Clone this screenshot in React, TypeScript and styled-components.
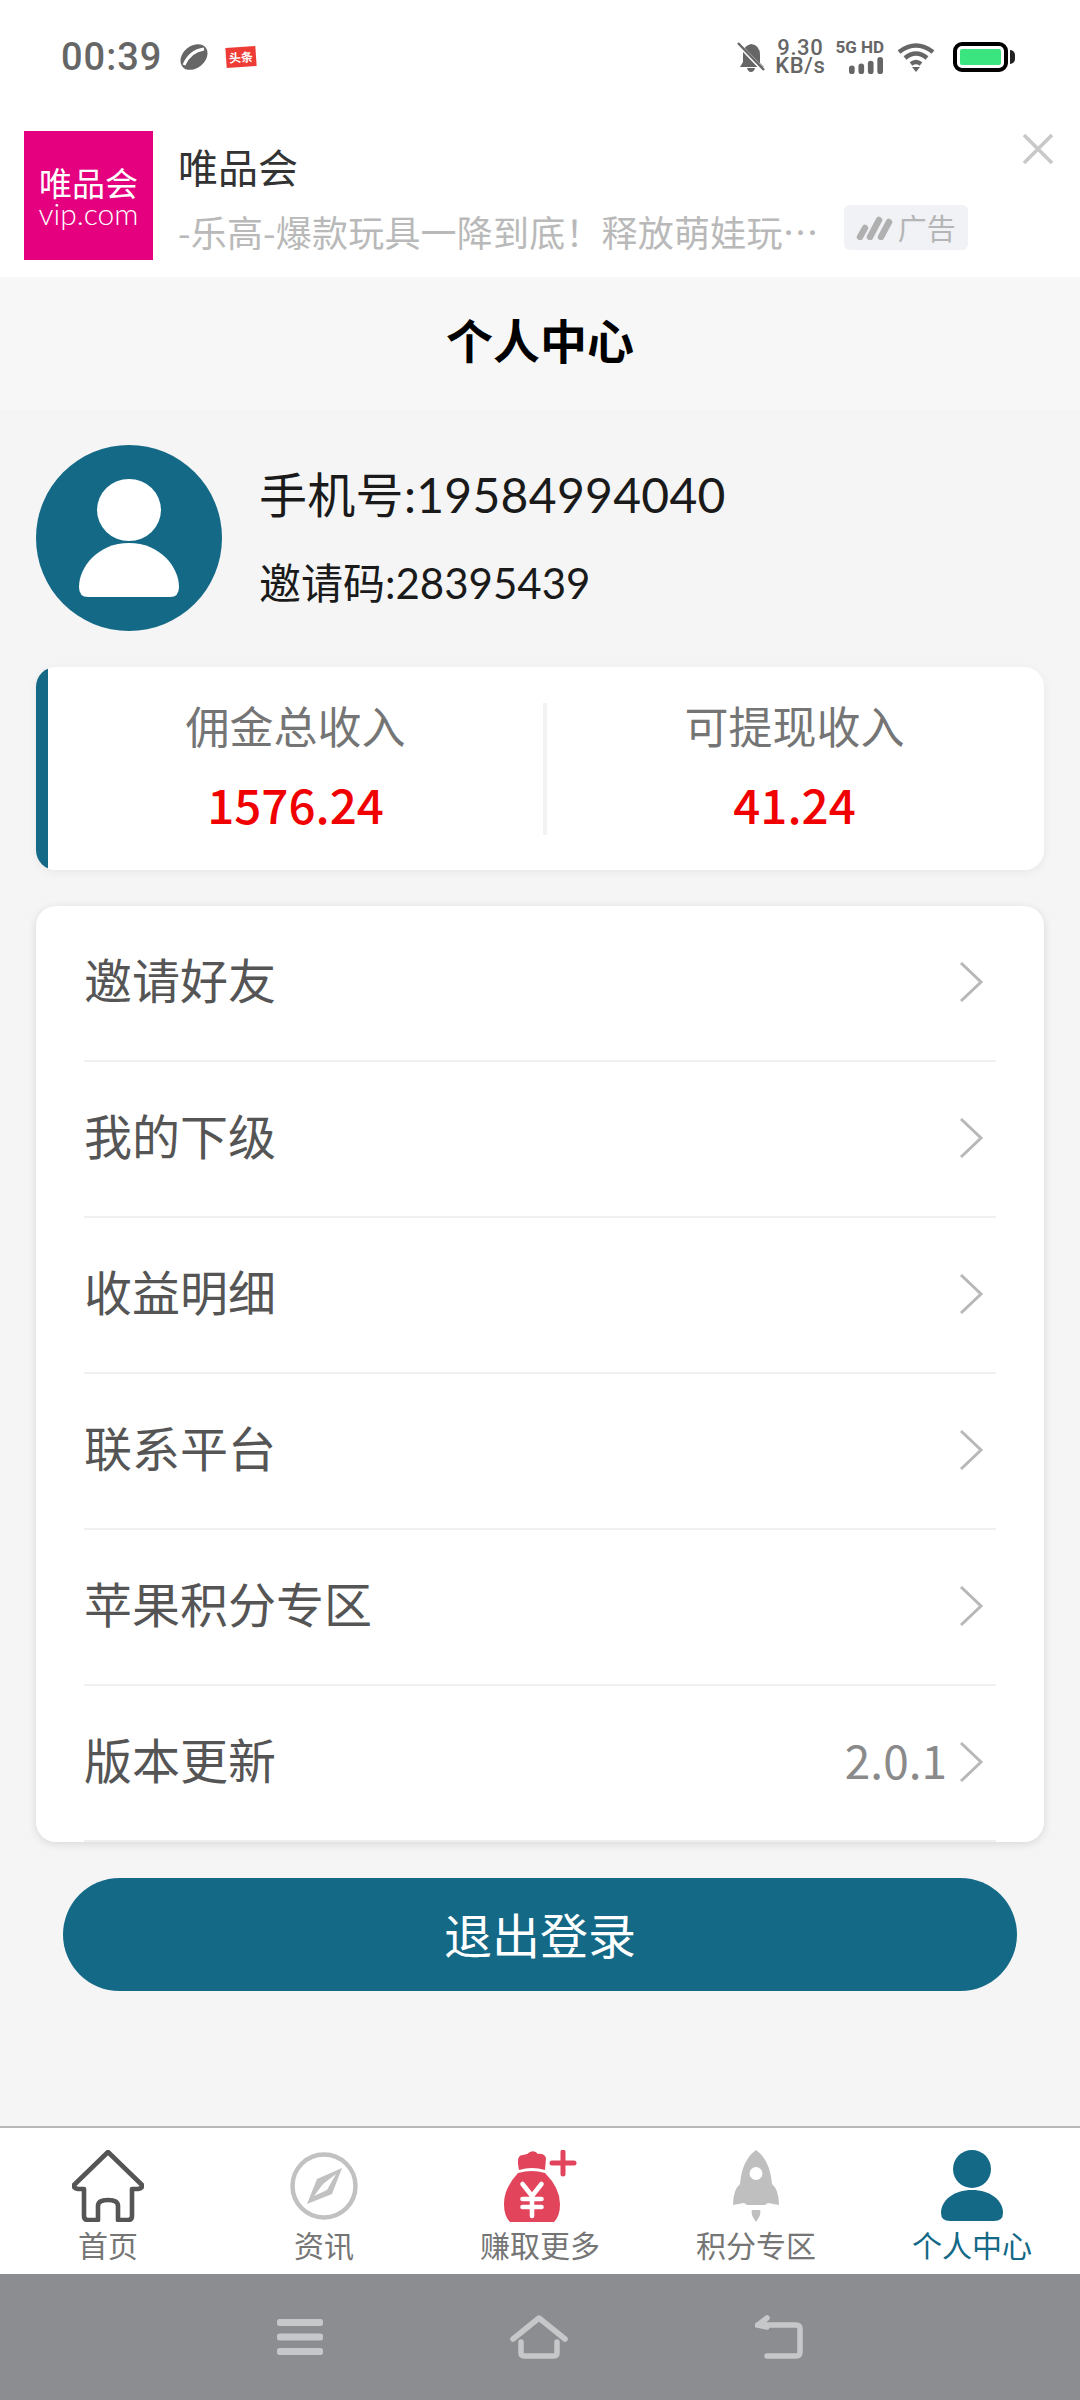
import React from "react"
import styled, { createGlobalStyle } from "styled-components"

const TEAL = "#136986"
const CJK = `"Noto Sans CJK SC", "Noto Sans", sans-serif`
const MIXED = `"Lato", "Noto Sans CJK SC", sans-serif`

const Chevron: React.FC = () => (
  <ChevronIcon viewBox="0 0 26 44" fill="none" stroke="#b8b8b8" strokeWidth="3">
    <path d="M3 3 L23 22 L3 41" />
  </ChevronIcon>
)

const HomeIcon = () => (
  <svg width="72" height="72" viewBox="0 0 72 72" fill="none" stroke="#555" strokeWidth="4.6" strokeLinejoin="round" strokeLinecap="round">
    <path d="M36 2 L70 35 Q71 38 66 39 L60 39 L60 66 Q60 70 56 70 L46 70 L46 56 Q46 50 36 50 Q26 50 26 56 L26 70 L16 70 Q12 70 12 66 L12 39 L6 39 Q1 38 2 35 Z" />
  </svg>
)

const CompassIcon = () => (
  <svg width="68" height="68" viewBox="0 0 68 68" fill="none">
    <circle cx="34" cy="34" r="31.5" stroke="#c1c1c1" strokeWidth="4.5" />
    <path d="M52 16 L42 42 L17 52 L27 27 Z M33 32 L24 44 L37 38 Z" fill="#c1c1c1" fillRule="evenodd" />
    <path d="M46 22 L33 32 L37 38 Z" fill="#fff" />
  </svg>
)

const MoneyIcon = () => (
  <svg width="96" height="72" viewBox="0 0 96 72">
    <path d="M26 14 Q25 5 31 5 Q35 5 38 2 Q43 0 46 4 Q52 3 54 8 L53 20 Q40 16 27 20 Z" fill="#e2445c" />
    <path d="M26 23 Q40 19 53 23 Q68 38 68 54 Q68 66 62 72 L18 72 Q12 66 12 54 Q12 38 26 23 Z" fill="#e2445c" />
    <path d="M30.5 34 L40 46 L49.5 34 M40 46 L40 66 M30.5 49 L49.5 49 M30.5 57 L49.5 57" fill="none" stroke="#fff" strokeWidth="4.6" strokeLinecap="round" />
    <path d="M71 2 L71 24 M60 13 L82 13" fill="none" stroke="#e2445c" strokeWidth="5" strokeLinecap="round" />
  </svg>
)

const RocketIcon = () => (
  <svg width="48" height="72" viewBox="0 0 48 72">
    <path fillRule="evenodd" d="M24 0 Q38 10 40 34 Q47 40 47 55 L36 53 L33 55 L15 55 L12 53 L1 55 Q1 40 8 34 Q10 10 24 0 Z M24 17 A6.5 6.5 0 1 0 24 30 A6.5 6.5 0 1 0 24 17 Z" fill="#bfbfbf" />
    <path d="M24 72 Q18 64 20 60 L28 60 Q30 64 24 72 Z" fill="#bfbfbf" />
  </svg>
)

const PersonIcon: React.FC<{ color: string }> = ({ color }) => (
  <svg width="64" height="72" viewBox="0 0 64 72" fill={color}>
    <circle cx="32" cy="19" r="19" />
    <path d="M32 40 C50 40 63 50 63 63 Q63 71 54 71 L10 71 Q1 71 1 63 C1 50 14 40 32 40 Z" />
  </svg>
)

const menu = ["邀请好友", "我的下级", "收益明细", "联系平台", "苹果积分专区", "版本更新"]

const tabs = [
  { label: "首页", icon: <HomeIcon /> },
  { label: "资讯", icon: <CompassIcon /> },
  { label: "赚取更多", icon: <MoneyIcon /> },
  { label: "积分专区", icon: <RocketIcon /> },
  { label: "个人中心", icon: <PersonIcon color={TEAL} />, active: true },
]

const App: React.FC = () => (
  <Page>
    <GlobalStyle />
    <StatusBar>
      <StatusLeft>
        <Time>00:39</Time>
        <svg width="32" height="32" viewBox="0 0 32 32">
          <ellipse cx="16" cy="16" rx="15" ry="11" fill="#666" transform="rotate(-40 16 16)" />
          <path d="M6 24 Q12 10 26 8" stroke="#fff" strokeWidth="3" fill="none" />
        </svg>
        <NewsBadge>头条</NewsBadge>
      </StatusLeft>
      <StatusRight>
        <svg width="28" height="30" viewBox="0 0 28 30">
          <path d="M14 2 Q23 3 23 13 L23 21 L27 25 L3 25 L6 20 L6 10 Q7 4 14 2 Z M10 26 L18 26 Q17 30 14 30 Q11 30 10 26 Z" fill="#666" />
          <path d="M1 2 L27 29" stroke="#fff" strokeWidth="4" />
          <path d="M1 1 L27 28" stroke="#666" strokeWidth="2.4" />
        </svg>
        <Speed>
          <span>9.30</span>
          <span>KB/s</span>
        </Speed>
        <Signal>
          <span>5G HD</span>
          <svg width="36" height="17" viewBox="0 0 36 18" fill="#666">
            <rect x="0" y="9" width="6" height="9" rx="3" />
            <rect x="10" y="7" width="6" height="11" rx="3" />
            <rect x="20" y="4" width="6" height="14" rx="3" />
            <rect x="30" y="0" width="6" height="18" rx="3" />
          </svg>
        </Signal>
        <svg width="38" height="30" viewBox="0 0 38 30" fill="none" stroke="#666" strokeWidth="4.4">
          <path d="M2 10 Q19 -3 36 10" />
          <path d="M8 16 Q19 7 30 16" />
          <path d="M14 22 Q19 18 24 22" />
          <path d="M15 25 L23 25 L19 30 Z" fill="#666" stroke="none" />
        </svg>
        <Battery>
          <BatteryFill />
        </Battery>
      </StatusRight>
    </StatusBar>

    <AdBanner>
      <AdLogo>
        <strong>唯品会</strong>
        <span>vip.com</span>
      </AdLogo>
      <AdText>
        <AdTitle>唯品会</AdTitle>
        <AdRow>
          <AdDesc>-乐高-爆款玩具一降到底！释放萌娃玩…</AdDesc>
          <AdBadge>
            <svg width="38" height="26" viewBox="0 0 38 26" stroke="#b0b0b0" strokeWidth="6.5" strokeLinecap="round">
              <path d="M4 23 L9 14 M14 23 L23 6 M25 23 L33 8" />
            </svg>
            广告
          </AdBadge>
        </AdRow>
      </AdText>
      <AdClose viewBox="0 0 32 32" stroke="#c8c8c8" strokeWidth="3.6">
        <path d="M2 2 L30 30 M30 2 L2 30" />
      </AdClose>
    </AdBanner>

    <Header>个人中心</Header>

    <Content>
      <Profile>
        <Avatar>
          <svg width="106" height="118" viewBox="0 0 106 118" fill="#fff">
            <ellipse cx="53" cy="31" rx="32" ry="31" />
            <path d="M53 64 C84 64 103 88 103 108 Q103 118 94 118 L12 118 Q3 118 3 108 C3 88 22 64 53 64 Z" />
          </svg>
        </Avatar>
        <ProfileText>
          <Phone>手机号:19584994040</Phone>
          <Invite>邀请码:28395439</Invite>
        </ProfileText>
      </Profile>

      <StatsCard>
        <Stat>
          <StatLabel>佣金总收入</StatLabel>
          <StatValue>1576.24</StatValue>
        </Stat>
        <StatDivider />
        <Stat>
          <StatLabel>可提现收入</StatLabel>
          <StatValue>41.24</StatValue>
        </Stat>
      </StatsCard>

      <MenuCard>
        {menu.map(item => (
          <MenuRow key={item}>
            <MenuLabel>{item}</MenuLabel>
            {item === "版本更新" && <Version>2.0.1</Version>}
            <Chevron />
          </MenuRow>
        ))}
      </MenuCard>

      <Logout>退出登录</Logout>
    </Content>

    <TabBar>
      {tabs.map(t => (
        <Tab key={t.label} $active={t.active}>
          <TabIcon>{t.icon}</TabIcon>
          <span>{t.label}</span>
        </Tab>
      ))}
    </TabBar>

    <NavBar>
      <svg width="46" height="36" viewBox="0 0 46 36" fill="#c6c7c9">
        <rect x="0" y="0" width="46" height="7" rx="2.5" />
        <rect x="0" y="14.5" width="46" height="7" rx="2.5" />
        <rect x="0" y="29" width="46" height="7" rx="2.5" />
      </svg>
      <svg width="58" height="44" viewBox="0 0 58 44" fill="none" stroke="#c6c7c9" strokeWidth="5.5" strokeLinejoin="round" strokeLinecap="round">
        <path d="M3 24 L29 3 L55 24" />
        <path d="M11 27 L11 38 Q11 41 15 41 L43 41 Q47 41 47 38 L47 27" />
      </svg>
      <svg width="48" height="44" viewBox="0 0 48 44" fill="none" stroke="#c6c7c9" strokeWidth="5.5" strokeLinecap="round">
        <path d="M3 10 L41 10 Q45 10 45 14 L45 37 Q45 41 41 41 L12 41" />
        <path d="M12 3 L3 10 L12 12" fill="#c6c7c9" />
      </svg>
    </NavBar>
  </Page>
)

const GlobalStyle = createGlobalStyle`
  html, body {
    margin: 0;
    padding: 0;
    background: #fff;
  }
  * {
    box-sizing: border-box;
  }
`

const Page = styled.div`
  width: 1080px;
  height: 2400px;
  display: flex;
  flex-direction: column;
  font-family: ${CJK};
  background: #f5f5f5;
  overflow: hidden;
`

const StatusBar = styled.div`
  height: 113px;
  padding: 0 72px 0 61px;
  background: #fff;
  display: flex;
  justify-content: space-between;
  align-items: center;
`

const StatusLeft = styled.div`
  display: flex;
  align-items: center;
  gap: 16px;
`

const Time = styled.span`
  font-family: "Roboto", sans-serif;
  font-size: 38px;
  font-weight: 500;
  letter-spacing: 1px;
  color: #666;
`

const NewsBadge = styled.span`
  width: 30px;
  height: 20px;
  background: #ee3b35;
  color: #fff;
  font-size: 12px;
  line-height: 20px;
  text-align: center;
  font-weight: 700;
  transform: rotate(-4deg);
`

const StatusRight = styled.div`
  display: flex;
  align-items: center;
  gap: 13px;
`

const Speed = styled.div`
  margin: 0 -3px;
  display: flex;
  flex-direction: column;
  align-items: center;
  font-family: "Roboto", sans-serif;
  font-weight: 500;
  color: #666;
  line-height: 18px;
  font-size: 22px;
  letter-spacing: 0.6px;
`

const Signal = styled.div`
  display: flex;
  flex-direction: column;
  align-items: flex-end;
  gap: 2px;
  font-family: "Roboto", sans-serif;
  font-weight: 700;
  color: #666;
  font-size: 17px;
  line-height: 16px;
  white-space: nowrap;
`

const Battery = styled.div`
  width: 55px;
  height: 30px;
  margin-left: 5px;
  border: 4px solid #000;
  border-radius: 9px;
  padding: 3px;
  position: relative;

  &::after {
    content: "";
    position: absolute;
    right: -11px;
    top: 4px;
    width: 5px;
    height: 14px;
    background: #222;
    border-radius: 0 6px 6px 0;
  }
`

const BatteryFill = styled.div`
  height: 100%;
  background: #3ae57f;
  border-radius: 2px;
`

const AdBanner = styled.div`
  position: relative;
  height: 164px;
  padding: 18px 0 17px 24px;
  background: #fff;
  display: flex;
  gap: 25px;
`

const AdLogo = styled.div`
  width: 129px;
  height: 129px;
  background: #e4007f;
  color: #fff;
  display: flex;
  flex-direction: column;
  align-items: center;
  justify-content: center;

  strong {
    font-size: 33px;
    line-height: 34px;
    font-weight: 400;
  }

  span {
    font-family: "Lato", sans-serif;
    font-weight: 300;
    font-size: 30px;
    line-height: 28px;
  }
`

const AdText = styled.div`
  display: flex;
  flex-direction: column;
`

const AdTitle = styled.div`
  margin-top: 10px;
  font-size: 40px;
  line-height: 50px;
  color: #333;
`

const AdRow = styled.div`
  margin-top: 15px;
  display: flex;
  align-items: center;
  gap: 25px;
`

const AdDesc = styled.div`
  font-size: 36px;
  line-height: 50px;
  letter-spacing: 0.2px;
  color: #b9b9b9;
  white-space: nowrap;
`

const AdBadge = styled.div`
  width: 124px;
  height: 45px;
  margin-top: -8px;
  border-radius: 6px;
  background: #f0f2f5;
  display: flex;
  align-items: center;
  justify-content: center;
  gap: 4px;
  font-size: 29px;
  color: #b5b5b5;
`

const AdClose = styled.svg`
  position: absolute;
  top: 20px;
  right: 26px;
  width: 32px;
  height: 32px;
`

const Header = styled.div`
  height: 133px;
  padding-bottom: 10px;
  background: #f7f7f7;
  display: flex;
  align-items: center;
  justify-content: center;
  font-size: 47px;
  font-weight: 700;
  color: #000;
`

const Content = styled.div`
  flex: 1;
  padding: 35px 36px 0;
  display: flex;
  flex-direction: column;
`

const Profile = styled.div`
  display: flex;
  align-items: center;
  gap: 37px;
`

const Avatar = styled.div`
  width: 186px;
  height: 186px;
  border-radius: 50%;
  background: ${TEAL};
  display: flex;
  align-items: center;
  justify-content: center;
`

const ProfileText = styled.div`
  display: flex;
  flex-direction: column;
  gap: 28px;
  padding-bottom: 2px;
`

const Phone = styled.div`
  font-family: ${MIXED};
  font-size: 48px;
  line-height: 64px;
  letter-spacing: 0.3px;
  color: #1a1a1a;
`

const Invite = styled.div`
  font-family: ${MIXED};
  font-size: 42px;
  line-height: 56px;
  color: #1a1a1a;
`

const StatsCard = styled.div`
  margin-top: 36px;
  height: 203px;
  padding: 0 2px 0 12px;
  background: linear-gradient(to right, ${TEAL} 12px, #fff 12px);
  border-radius: 20px;
  box-shadow: 0 2px 10px rgba(0, 0, 0, 0.06);
  display: flex;
  align-items: center;
`

const Stat = styled.div`
  flex: 1;
  padding-bottom: 9px;
  display: flex;
  flex-direction: column;
  align-items: center;
  gap: 23px;
`

const StatDivider = styled.div`
  width: 4px;
  height: 132px;
  background: #f2f2f2;
`

const StatLabel = styled.div`
  font-size: 44px;
  line-height: 56px;
  color: #757575;
`

const StatValue = styled.div`
  font-size: 47.5px;
  line-height: 56px;
  font-weight: 500;
  color: #f00000;
`

const MenuCard = styled.div`
  margin-top: 36px;
  padding: 0 48px;
  background: #fff;
  border-radius: 20px;
  box-shadow: 0 2px 10px rgba(0, 0, 0, 0.12);
`

const MenuRow = styled.div`
  height: 156px;
  display: flex;
  align-items: center;
  border-bottom: 2px solid #f0f0f0;
`

const MenuLabel = styled.div`
  flex: 1;
  margin-bottom: 10px;
  font-size: 48px;
  color: #555;
`

const Version = styled.div`
  margin: 0 11px 8px 0;
  font-size: 46px;
  color: #8a8a8a;
`

const ChevronIcon = styled.svg`
  width: 26px;
  height: 44px;
  margin: 0 12px 3px 0;
`

const Logout = styled.button`
  margin: 36px 27px 0;
  height: 113px;
  padding-bottom: 4px;
  border: none;
  border-radius: 57px;
  background: ${TEAL};
  color: #fff;
  font-family: ${CJK};
  font-size: 48px;
`

const TabBar = styled.div`
  height: 148px;
  background: #fff;
  border-top: 2px solid #b8b8b8;
  display: grid;
  grid-template-columns: repeat(5, 1fr);
`

const Tab = styled.div<{ $active?: boolean }>`
  padding-top: 22px;
  display: flex;
  flex-direction: column;
  align-items: center;
  font-size: 30px;
  line-height: 40px;
  color: ${p => (p.$active ? TEAL : "#757575")};
`

const TabIcon = styled.div`
  height: 72px;
  margin-bottom: 2px;
  display: flex;
  align-items: center;
  justify-content: center;
`

const NavBar = styled.div`
  height: 126px;
  background: #8c8d91;
  padding: 0 277px 0;
  display: flex;
  align-items: center;
  justify-content: space-between;
`

export default App
